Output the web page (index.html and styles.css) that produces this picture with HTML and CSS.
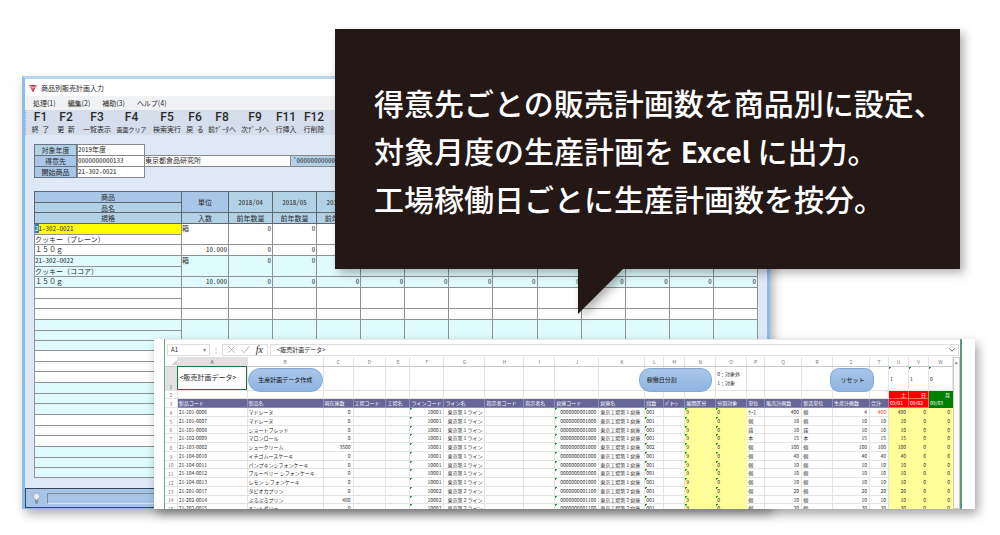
FILE: index.html
```html
<!DOCTYPE html>
<html lang="ja">
<head>
<meta charset="utf-8">
<title>商品別販売計画入力</title>
<link rel="stylesheet" href="styles.css">
</head>
<body>
<main class="stage">
  <section class="app">
    <header class="app-title">
      <svg class="app-logo" viewBox="0 0 9 9" aria-hidden="true"><path d="M0 1h9L8 3H1z" fill="#c4314f"/><path d="M1.500 3.500h6L5 9H4z" fill="#d4455f"/><path d="M1 1l3.500 4L8 1M3 4h3" stroke="#fff" stroke-width=".5" fill="none"/></svg>
      <h1>商品別販売計画入力</h1>
    </header>
    <nav class="app-menu">
      <button>処理(1)</button><button>編集(2)</button><button>補助(3)</button><button>ヘルプ(4)</button>
    </nav>
    <div class="app-tools">
      <button><b>F1</b>終 了</button>
      <button><b>F2</b>更 新</button>
      <button><b>F3</b>一覧表示</button>
      <button><b>F4</b>画面クリア</button>
      <button><b>F5</b>検索実行</button>
      <button><b>F6</b>戻 る</button>
      <button><b>F8</b>前ﾃﾞｰﾀへ</button>
      <button><b>F9</b>次ﾃﾞｰﾀへ</button>
      <button><b>F11</b>行挿入</button>
      <button><b>F12</b>行削除</button>
    </div>
    <div class="app-body">
      <form class="fields">
        <label for="year">対象年度</label><input id="year" value="2019年度">
        <label class="strong" for="client">得意先</label><input id="client" value="0000000000133"><input class="wide" aria-label="得意先名" value="東京都食品研究所"><input class="code" aria-label="得意先範囲" value="'0000000000000">
        <label class="strong" for="item">開始商品</label><input id="item" value="21-302-0021">
      </form>
      <table class="plan">
        <colgroup><col class="c-item"><col class="c-unit"><col span="12"></colgroup>
        <thead id="plan-head"></thead>
        <tbody id="plan-body"></tbody>
      </table>
    </div>
    <footer class="app-status">
      <svg viewBox="0 0 10 14" aria-hidden="true"><circle cx="5" cy="4.500" r="3.800" fill="#dbe6f1" stroke="#8397ad" stroke-width=".7"/><path d="M3.500 8.500h3v3.500l-1.500 1.500-1.500-1.500z" fill="#7e8fa2"/><path d="M3.500 4l1.500 1.500L6.500 4M5 5.500v3" stroke="#fff" stroke-width=".8" fill="none"/></svg>
      <input aria-label="メッセージ" readonly>
    </footer>
  </section>

  <section class="book">
    <div class="book-frame">
      <div class="formula">
        <label class="name-box"><input aria-label="名前" value="A1"><span>▾</span></label>
        <span class="dots">⋮</span>
        <div class="formula-icons">
          <svg viewBox="0 0 10 10"><path d="M1.500 1.500l7 7M8.500 1.500l-7 7" stroke="#aaa" fill="none"/></svg>
          <svg viewBox="0 0 10 10"><path d="M1 5.500l2.500 3L9 1.500" stroke="#aaa" fill="none"/></svg>
          <i>fx</i>
        </div>
        <label class="formula-box"><input aria-label="数式" value="&lt;販売計画データ&gt;"><svg viewBox="0 0 6 4"><path d="M.500 .500L3 3.200 5.500 .500" stroke="#666" fill="none"/></svg></label>
      </div>
      <div class="grid-area">
        <table class="sheet">
          <colgroup id="sheet-cols"></colgroup>
          <thead id="sheet-head"></thead>
          <tbody id="sheet-body"></tbody>
        </table>
        <button class="shape make">生産計画データ作成</button>
        <button class="shape split">稼働日分割</button>
        <button class="shape reset">リセット</button>
        <div class="scroll"><span>▴</span></div>
      </div>
    </div>
  </section>

  <aside class="callout">
    <p>得意先ごとの販売計画数を商品別に設定、<br>対象月度の生産計画を <b>Excel</b> に出力。<br>工場稼働日ごとに生産計画数を按分。</p>
  </aside>
</main>
<script src="app.js"></script>
</body>
</html>
```

FILE: styles.css
```css
* { box-sizing: border-box; }
body { margin: 0; background: #fff; color: #2b2b2b; font-family: "Noto Sans CJK JP", sans-serif; }
button, input { font: inherit; color: inherit; border: 0; padding: 0; margin: 0; background: none; border-radius: 0; min-width: 0; font-feature-settings: inherit; }
table { border-collapse: collapse; table-layout: fixed; width: 100%; }
td, th { padding: 0; font-weight: 400; overflow: hidden; white-space: nowrap; }
.stage { position: relative; min-height: 535px; overflow: hidden; }

/* Planning window */
.app { position: absolute; left: 22px; right: 230px; top: 76px; display: flex; flex-direction: column; border: 3px solid #8dbbec; border-top-color: #b7d3f0; border-bottom-width: 1px; background: #dfe9f5; box-shadow: 3px 5px 10px rgba(0,0,0,.32); font-size: 7px; line-height: 10px; }
.app-title { display: flex; align-items: center; gap: 4px; height: 17px; padding-left: 4px; background: #fff; }
.app-logo { width: 8px; height: 8px; }
.app-title h1 { margin: 0; font-size: 7px; font-weight: 400; line-height: 10px; }
.app-menu { display: flex; gap: 12px; height: 14px; padding-left: 8px; background: #f1f2f3; }
.app-tools { display: grid; grid-template-columns: 25px 26px 36px 33px 38px 18px 36px 30px 32px 24px; height: 25px; padding-left: 2px; border-left: 1px dotted #9aa6b8; background: #d6deeb; }
.app-tools button { display: flex; flex-direction: column; align-items: center; white-space: nowrap; line-height: 9px; font-feature-settings: "hwid"; }
.app-tools button:nth-child(4) { font-size: 6px; }
.app-tools b { font: 500 12px/15px Roboto, sans-serif; font-feature-settings: normal; }
.app-body { padding: 9px 9px 10px; font-feature-settings: "hwid"; }
.fields { display: grid; grid-template-columns: 43px 67px 146px 1fr; grid-auto-rows: 11px; width: 60%; line-height: 9px; }
.fields label { grid-column: 1; border: 1px solid #68747f; margin-bottom: -1px; background: #b1d2e6; text-align: center; line-height: 10px; }
.fields label.strong { background: #a8c6e8; }
.fields input { border: 1px solid #888; margin-bottom: -1px; margin-right: -1px; background: #fff; height: 12px; line-height: 9px; padding-bottom: 2px; }
.fields .code { background: #b1d2e6; padding-left: 2px; }
.plan { margin-top: 14px; background: #fff; line-height: 8px; }
.c-item { width: 147px; }
.c-unit { width: 47px; }
.plan tr { height: 11px; }
.plan tr:nth-child(3n+2), .plan tr:nth-child(12n) { height: 10px; }
.plan td, .plan th { border: 1px solid #8e9293; vertical-align: top; }
.plan th { background: #b1d2e6; border-color: #5e666e; vertical-align: middle; }
.plan th.strong { background: #a8c6e8; }
.plan .full { font-feature-settings: normal; }
.plan .cyan { background: #dffbfd; }
.plan .num { text-align: right; padding-right: 1px; }
.plan .active { background: #ff0; }
.plan mark { background: #2c7fd0; color: #fff; }
.app-status { display: flex; align-items: center; gap: 6px; height: 20px; padding: 0 8px 0 6px; border: 1px solid #35465a; background: #a5c4e6; }
.app-status svg { width: 9px; height: 13px; }
.app-status input { flex: 1; height: 11px; border: 1px solid #7d8c9e; border-right-color: #d5e4f4; border-bottom-color: #d5e4f4; }

/* Spreadsheet */
.book { position: absolute; left: 154px; right: 25px; top: 339px; height: 170px; overflow: hidden; background: #fff; box-shadow: 3px 5px 10px rgba(0,0,0,.36); font-size: 5px; line-height: 7px; }
.book-frame { margin: 0 13px 0 10px; border-left: 1px solid #69a587; border-right: 2px solid #5d997a; }
.formula { display: flex; align-items: center; height: 18px; padding: 2px 1px 0 2px; border-top: 1px solid #e9e9e9; font-size: 6px; line-height: 8px; }
.name-box { display: flex; width: 43px; height: 12px; border: 1px solid #ddd; padding: 0 3px; align-items: center; }
.name-box span { color: #888; }
.name-box input, .formula-box input { flex: 1; height: 10px; width: 10px; }
.dots { width: 12px; text-align: center; color: #999; }
.formula-icons { display: flex; justify-content: space-between; align-items: center; width: 46px; height: 12px; padding: 0 4px; border: 1px solid #ddd; }
.formula-icons svg { width: 9px; height: 9px; }
.formula-icons i { font: italic 10px/10px "Liberation Serif", serif; }
.formula-box { flex: 1; display: flex; align-items: center; margin-left: 2px; height: 12px; border: 1px solid #ddd; padding: 0 3px 0 6px; }
.formula-box svg { width: 6px; height: 4px; }
.grid-area { position: relative; display: grid; grid-template-columns: 1fr 7px; align-items: start; }
.c-row { width: 12px; }
.sheet td, .sheet th { border-right: 1px solid #e4e4e4; border-bottom: 1px solid #e4e4e4; }
.sheet tr { height: 9px; }
.sheet tbody tr:nth-child(4n+2) { height: 8px; }
.sheet thead th { color: #777; border-bottom-color: #ccc; }
.sheet tbody th { color: #777; vertical-align: bottom; }
.sheet td { padding-left: 1px; }
.sheet tr.first { height: 24px; }
.sheet .first th, .sheet thead .on { background: #e1e1e1; color: #217346; }
.sheet thead .corner { color: #ccc; text-align: right; }
.sheet .first .a1 { outline: 1px solid #217346; outline-offset: -1px; font-size: 7px; padding: 0 0 2px 2px; }
.sheet .legend { line-height: 9px; white-space: pre; }
.sheet .heads td { background: #669; color: #fff; border-color: #8c8cb4; }
.sheet .num { text-align: right; padding-right: 2px; }
.sheet .yellow { background-color: #ff9; border-color: #ff9; }
.sheet .flag { background-image: linear-gradient(135deg, #27942c 2px, transparent 2px); background-repeat: no-repeat; }
.sheet .warn { color: #f33; }
.sheet tbody td.red { background: #f00; color: #fff; border-color: #f66; }
.sheet tbody td.green { background: #008000; color: #fff; border-color: #008000; }
.shape { position: absolute; top: 11px; height: 24px; border: 1px solid #84aad6; background: linear-gradient(#a9c6e8, #8fb5e1); font-size: 6px; line-height: 8px; color: #111; }
.make { left: 10.400%; width: 75px; border-radius: 12px; }
.split { left: 59.600%; width: 73px; border-radius: 11px; text-align: left; padding-left: 7px; }
.reset { left: 83.700%; width: 44px; border-radius: 9px; }
.scroll { height: 152px; border: 1px solid #ccc; background: #fafafa; color: #777; text-align: center; }

/* Callout */
.callout { position: absolute; left: 335px; right: 40px; top: 29px; height: 240px; padding: 49px 0 0 39px; background: #231815; color: #fff; filter: drop-shadow(4px 4px 5px rgba(0,0,0,.3)); }
.callout::after { content: ""; position: absolute; left: 243px; top: 100%; width: 45px; height: 45px; background: #231815; clip-path: polygon(0 0, 100% 0, 0 100%); }
.callout p { margin: 0; font-size: 30px; line-height: 48px; font-weight: 500; white-space: nowrap; }
.callout b { font-size: 28px; line-height: 28px; font-weight: 700; }
```

FILE: app.js
```js
const el = (tag, text = "", cls = "", attrs = {}) => {
  const node = document.createElement(tag);
  node.textContent = text;
  if (cls) node.className = cls;
  Object.entries(attrs).forEach(([k, v]) => node.setAttribute(k, v));
  return node;
};
const row = (parent, cells, cls = "") => {
  const tr = el("tr", "", cls);
  tr.append(...cells);
  parent.append(tr);
};

/* Planning table */
const months = [4, 5, 6, 7, 8, 9, 10, 11, 12, 1, 2, 3].map((m, i) => (i < 9 ? "2018/" : "2019/") + String(m).padStart(2, "0"));
const head = document.getElementById("plan-head");
row(head, [el("th", "商品", "strong"), el("th", "単位", "strong", { rowspan: 2 }), ...months.map(m => el("th", m, "", { rowspan: 2 }))]);
row(head, [el("th", "品名")]);
row(head, [el("th", "規格"), el("th", "入数"), ...months.map(() => el("th", "前年数量"))]);

const items = [["21-302-0021", "クッキー（プレーン）"], ["21-302-0022", "クッキー（ココア）"]];
const plan = document.getElementById("plan-body");
for (let i = 0; i < 8; i++) {
  const item = items[i];
  const tone = i % 2 ? "cyan" : "";
  const zero = item ? "0" : "";
  const code = el("td", item ? item[0] : "", i ? tone : "active");
  if (i === 0) {
    code.textContent = "";
    code.append(el("mark", "2"), "1-302-0021");
  }
  row(plan, [code, el("td", item ? "箱" : "", tone, { rowspan: 2 }), ...months.map(() => el("td", zero, tone + " num", { rowspan: 2 }))]);
  row(plan, [el("td", item ? item[1] : "", tone + " full")]);
  row(plan, [el("td", item ? "１５０ｇ" : "", tone + " full"), el("td", item ? "10.000" : "", tone + " num"), ...months.map(() => el("td", zero, tone + " num"))]);
}

/* Spreadsheet */
const widths = [70, 76, 30, 33, 24, 34, 41, 39, 31, 44, 46, 19, 21, 31, 31, 18, 37, 31, 37, 19, 20, 20, 24];
const cols = document.getElementById("sheet-cols");
cols.append(el("col", "", "c-row"));
widths.forEach(w => cols.append(el("col", "", "", { style: `width:${w / 7.88}%` })));
const letters = "ABCDEFGHIJKLMNOPQRSTUVW".split("");
row(document.getElementById("sheet-head"), [el("th", "◢", "corner"), ...letters.map((c, i) => el("th", c, i ? "" : "on"))]);

const sheet = document.getElementById("sheet-body");
const firstRow = { A: ["<販売計画データ>", "a1"], O: ["0：対象外\n1：対象", "legend"], U: ["1", "flag"], V: ["1", "flag"], W: ["0", "flag"] };
row(sheet, [el("th", "1"), ...letters.map(c => el("td", ...(firstRow[c] || [""])))], "first");
const days = { U: ["土", "red num"], V: ["日", "red num"], W: ["月", "green num"] };
row(sheet, [el("th", "2"), ...letters.map(c => el("td", ...(days[c] || [""])))]);
const titles = ["製品コード", "製品名", "現在庫数", "工場コード", "工場名", "ラインコード", "ライン名", "指示者コード", "指示者名", "倉庫コード", "倉庫名", "段数", "ﾊﾟﾀｰﾝ", "展開区分", "分割対象", "単位", "販売計画数", "製造単位", "生産計画数", "合計", "09/01", "09/02", "09/03"];
row(sheet, [el("th", "3"), ...titles.map((t, i) => el("td", t, i < 20 ? "" : i < 22 ? "red" : "green"))], "heads");

const data = [
  ["21-101-0006", "マドレーヌ", 0, "個", 400], ["21-101-0007", "マドレーヌ", 0, "個", 10],
  ["21-101-0008", "ショートブレッド", 0, "袋", 10], ["21-102-0009", "マロンロール", 0, "本", 15],
  ["21-103-0002", "シュークリーム", 3500, "個", 100], ["21-104-0010", "イチゴムースケーキ", 0, "個", 40],
  ["21-104-0011", "パンプキンシフォンケーキ", 0, "個", 10], ["21-104-0012", "ブルーベリー シフォンケーキ", 0, "個", 10],
  ["21-104-0013", "レモン シフォンケーキ", 0, "個", 10], ["21-201-0017", "タピオカプリン", 0, "個", 20],
  ["21-202-0014", "ぷるぷるプリン", 480, "個", 10], ["21-202-0015", "ミントゼリー", 0, "個", 30]
];
data.forEach(([code, name, stock, unit, qty], i) => {
  const second = i > 8;
  const cells = [
    [code], [name], [stock, "num"], [""], [""],
    [second ? "10002" : "10001", "num flag"], [second ? "東京第２ライン" : "東京第１ライン", "num"], [""], [""],
    [second ? "0000000001100" : "0000000001000", "num flag"], [second ? "東京工場第２倉庫" : "東京工場第１倉庫"],
    [i === 4 ? "002" : "001", "flag"], [""], ["9", "yellow flag"], ["0", "yellow flag"],
    [i ? unit : "ｹｰｽ"], [qty, "num"], [unit], [i ? qty : 4, "num"], [qty, i ? "num" : "num warn"],
    [qty, "yellow num"], ["0", "yellow num"], ["0", "yellow num"]
  ];
  row(sheet, [el("th", String(i + 4)), ...cells.map(c => el("td", ...c))]);
});
```
